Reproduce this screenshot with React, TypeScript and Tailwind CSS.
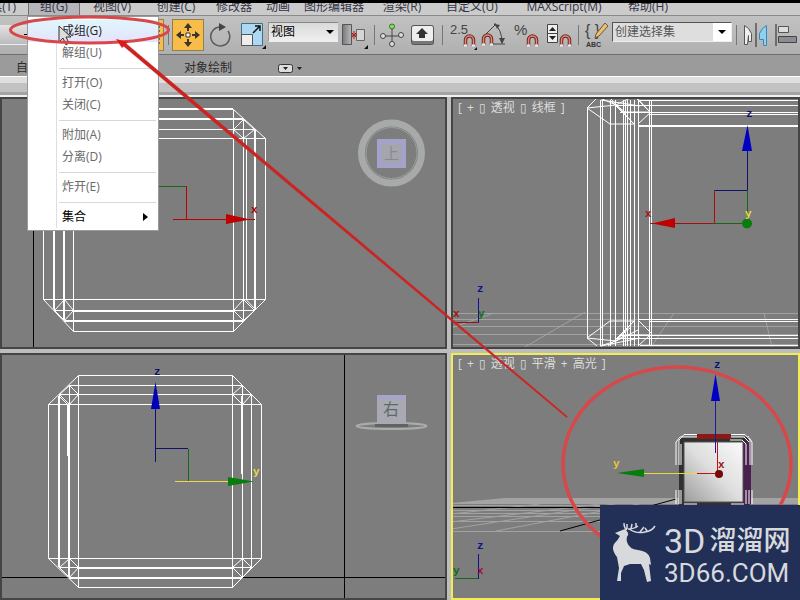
import React from "react";

const CJK = "font-['Open_Sans','Noto_Sans_CJK_SC',sans-serif]";

const menus = [
  { label: "组(G)", width: "w-[52px]", open: true },
  { label: "视图(V)", width: "w-16" },
  { label: "创建(C)", width: "w-16" },
  { label: "修改器", width: "w-[52px]" },
  { label: "动画", width: "w-9" },
  { label: "图形编辑器", width: "w-[76px]" },
  { label: "渲染(R)", width: "w-[60px]" },
  { label: "自定义(U)", width: "w-20" },
  { label: "MAXScript(M)", width: "w-[104px]" },
  { label: "帮助(H)", width: "w-16" },
];

function MenuBar() {
  return (
    <nav className="flex h-[13px] shrink-0 items-end overflow-hidden border-b border-[#8a8a8a] bg-[#cbcbcb] text-xs text-[#333344]">
      <button className="flex h-4 w-7 shrink-0 justify-end overflow-hidden pr-3 leading-4">
        <span className="shrink-0">工具(T)</span>
      </button>
      {menus.map((m) => (
        <button
          key={m.label}
          className={`${m.width} h-4 shrink-0 whitespace-nowrap leading-4 ${m.open ? "border-x border-[#707070] bg-[#b5b5ba]" : ""}`}
        >
          {m.label}
        </button>
      ))}
    </nav>
  );
}

function Item({ label, state }: { label: string; state?: "hot" | "on" | "sub" }) {
  return (
    <button
      className={`flex h-[22px] w-full items-center pl-[34px] pr-2.5 text-left ${
        state === "hot" ? "bg-gradient-to-b from-[#dff6fc] to-[#e6e2fb] text-[#222]" : state ? "text-black" : "text-[#686868]"
      }`}
    >
      <span className="grow">{label}</span>
      {state === "sub" && (
        <svg width="5" height="8" viewBox="0 0 5 8">
          <path d="M0 0L5 4L0 8Z" />
        </svg>
      )}
    </button>
  );
}

function Separator() {
  return (
    <div className="flex h-2 items-center pl-[31px] pr-0.5">
      <div className="h-px w-full bg-[#d8d8d8]" />
    </div>
  );
}

function GroupMenu() {
  return (
    <div className="absolute left-[27px] top-4 w-[132px] border border-[#9a9a9a] bg-white pb-0.5 pt-[3px] text-xs">
      <div className="absolute inset-y-0.5 left-7 w-px bg-[#dedede]" />
      <div className="relative">
        <Item label="成组(G)" state="hot" />
        <Item label="解组(U)" />
        <Separator />
        <Item label="打开(O)" />
        <Item label="关闭(C)" />
        <Separator />
        <Item label="附加(A)" />
        <Item label="分离(D)" />
        <Separator />
        <Item label="炸开(E)" />
        <Separator />
        <Item label="集合" state="sub" />
      </div>
    </div>
  );
}

function Tool({ label, width = "w-8", active, children }: { label: string; width?: string; active?: boolean; children: React.ReactNode }) {
  return (
    <button aria-label={label} className={`${width} flex h-8 shrink-0 items-center justify-center ${active ? "border border-[#8f8050] bg-[#f8bd48]" : ""}`}>
      {children}
    </button>
  );
}

function Divider() {
  return (
    <div className="flex h-5 w-2 shrink-0 justify-center">
      <div className="w-px bg-[#777]" />
    </div>
  );
}

function Magnet({ x, y }: { x: number; y: number }) {
  return (
    <g transform={`translate(${x} ${y})`} fill="none">
      <path d="M1.500 11V5a3.500 3.500 0 0 1 8 0v6" stroke="#6b2a22" strokeWidth="3.500" />
      <path d="M1.500 11V5a3.500 3.500 0 0 1 8 0v6" stroke="#e88474" strokeWidth="1.500" />
      <path d="M0 10.500h3M8 10.500h3" stroke="#eee" strokeWidth="2" />
    </g>
  );
}

function Toolbar() {
  return (
    <div className="flex h-[39px] shrink-0 items-center overflow-hidden border-b border-[#6f6f6f] bg-gradient-to-b from-[#c2c2c2] to-[#b0b0b0]">
      <div className="flex h-8 w-[132px] shrink-0 items-start pt-1.5">
        <div className="flex h-5 w-10 items-center border-b border-[#eee] bg-gradient-to-b from-[#e2e2e2] to-[#bcbcbc] pl-6">
          <div className="h-px w-1 bg-black" />
        </div>
      </div>
      <Tool label="选择区域" active>
        <svg width="28" height="24" viewBox="0 0 28 24">
          <rect x="3" y="1" width="22" height="22" fill="none" stroke="#111" strokeDasharray="2 2" />
        </svg>
      </Tool>
      <Divider />
      <Tool label="选择并移动" active>
        <svg width="24" height="24" viewBox="0 0 24 24" fill="#3b352a">
          <path d="M12 0l4 5h-3v3h-2V5H8zM12 24l4-5h-3v-3h-2v3H8zM0 12l5-4v3h3v2H5v3zM24 12l-5-4v3h-3v2h3v3z" />
          <path d="M10 10h4v4h-4z" fill="#fff" stroke="#3b352a" />
        </svg>
      </Tool>
      <Tool label="选择并旋转">
        <svg width="24" height="24" viewBox="0 0 24 24">
          <path d="M13 4A9.500 9.500 0 1 0 20 8" fill="none" stroke="#5a5a5a" strokeWidth="1.500" />
          <path d="M11 0l7 4-7 4z" fill="#444" />
        </svg>
      </Tool>
      <Tool label="选择并缩放">
        <svg width="28" height="28" viewBox="0 0 28 28">
          <path d="M3.500 2.500h21v22h-21z" fill="#acd9f1" stroke="#3d718c" />
          <path d="M3.500 13.500h11v11h-11z" fill="#eee" stroke="#555" />
          <path d="M15 12l7-7M17 5h5v5" fill="none" stroke="#111" strokeWidth="1.500" />
          <path d="M28 24v4h-4z" fill="#111" />
        </svg>
      </Tool>
      <div className="relative h-8 w-[70px] shrink-0 py-[3px]">
        <select
          aria-label="参考坐标系"
          className="block h-5 w-full appearance-none border-b border-l border-t border-b-[#eee] border-l-[#999] border-t-[#888] bg-gradient-to-b from-[#dadada] to-[#efefef] pl-0.5 text-xs leading-4 text-black"
        >
          <option>视图</option>
        </select>
        <svg className="pointer-events-none absolute right-1 top-[11px]" width="8" height="4" viewBox="0 0 8 4">
          <path d="M0 0h8L4 4z" />
        </svg>
      </div>
      <Tool label="使用轴点中心">
        <svg width="28" height="28" viewBox="0 0 28 28">
          <defs>
            <linearGradient id="pv">
              <stop stopColor="#75797c" />
              <stop offset="1" stopColor="#b6babd" />
            </linearGradient>
          </defs>
          <path d="M2.500 3.500h9v20h-9z" fill="url(#pv)" stroke="#555" />
          <path d="M16.500 8.500h8v11h-8z" fill="#d5d5d5" stroke="#666" />
          <path d="M11 14h6M14 10v8M12 12l4 4M16 12l-4 4" stroke="#b11919" />
          <path d="M28 24v4h-4z" fill="#111" />
        </svg>
      </Tool>
      <Divider />
      <Tool label="选择并操纵" width="w-7">
        <svg width="24" height="24" viewBox="0 0 24 24" fill="#ddd" stroke="#444">
          <path d="M12 3v18M2 13h20" />
          <circle cx="12" cy="3.500" r="2.500" fill="#8fd46c" stroke="#2e7a1a" />
          <circle cx="12" cy="21" r="2.500" />
          <circle cx="3" cy="13" r="2.500" />
          <circle cx="21" cy="12" r="2.500" />
        </svg>
      </Tool>
      <Tool label="键盘快捷键覆盖切换">
        <svg width="24" height="22" viewBox="0 0 24 22">
          <rect x="1.500" y="1.500" width="22" height="19" rx="2" fill="#777" stroke="#555" />
          <rect x="2" y="2" width="21" height="15" rx="2" fill="#eee" />
          <path d="M12 4l6 6h-3v4H9v-4H6z" fill="#333" />
        </svg>
      </Tool>
      <Divider />
      <Tool label="捕捉开关">
        <svg width="32" height="32" viewBox="0 0 32 32">
          <text x="4" y="15" fontSize="13" fill="#444" fontFamily="Liberation Sans">2.5</text>
          <Magnet x={18} y={16} />
          <path d="M31 28v3h-3z" fill="#111" />
        </svg>
      </Tool>
      <Tool label="角度捕捉切换">
        <svg width="32" height="32" viewBox="0 0 32 32">
          <path d="M6 17L18 5l-2 0M14 25h13M16 5q8 5 8 19" fill="none" stroke="#444" />
          <path d="M21 19h6l-3 6zM17 5l5 1-3 4z" fill="#444" />
          <Magnet x={4} y={15} />
        </svg>
      </Tool>
      <Tool label="百分比捕捉切换">
        <svg width="32" height="32" viewBox="0 0 32 32">
          <text x="4" y="16" fontSize="15" fill="#444" fontFamily="Liberation Sans">%</text>
          <Magnet x={17} y={16} />
        </svg>
      </Tool>
      <Tool label="微调器捕捉切换">
        <svg width="32" height="32" viewBox="0 0 32 32">
          <path d="M5.500 5.500h10v18h-10zM5 14.500h11" fill="#eee" stroke="#444" />
          <path d="M7 12l3.500-4 3.500 4zM7 17l3.500 4 3.500-4z" fill="#222" />
          <Magnet x={18} y={16} />
        </svg>
      </Tool>
      <Divider />
      <Tool label="编辑命名选择集" width="w-[30px]">
        <svg width="28" height="30" viewBox="0 0 28 30">
          <text x="2" y="16" fontSize="16" fill="#444" fontFamily="Liberation Sans">{"{ }"}</text>
          <path d="M13 14l9-11 3 3-9 10-4 2z" fill="#edc06b" stroke="#654" />
          <text x="3" y="27" fontSize="7" fontWeight="bold" fill="#333" fontFamily="Liberation Sans">ABC</text>
        </svg>
      </Tool>
      <div className="h-8 w-[120px] shrink-0 py-[3px]">
        <div className="flex h-5 border border-b-[#eee] border-l-[#555] border-r-[#eee] border-t-[#555] bg-white">
          <input aria-label="命名选择集" defaultValue="创建选择集" className="w-[100px] bg-[#dedede] pl-0.5 text-xs leading-4 text-[#555] outline-none" />
          <button aria-label="展开" className="flex grow items-center justify-center">
            <svg width="8" height="4" viewBox="0 0 8 4">
              <path d="M0 0h8L4 4z" />
            </svg>
          </button>
        </div>
      </div>
      <Divider />
      <Tool label="镜像">
        <svg width="28" height="28" viewBox="0 0 28 28">
          <path d="M2.500 4.500l4 3 3 5v8h-3v-6l-1 9h-3z" fill="#eee" stroke="#555" />
          <path d="M24.500 4.500l-4 3-3 5v6h4v6h3z" fill="#8ed0f2" stroke="#3a88b4" />
          <path d="M14 2v24" stroke="#222" />
        </svg>
      </Tool>
      <Tool label="对齐" width="w-7">
        <svg width="28" height="28" viewBox="0 0 28 28">
          <path d="M4 3v22" stroke="#222" />
          <path d="M6.500 5.500h10v6h-10z" fill="#ddd" stroke="#555" />
          <path d="M6.500 15.500h18v6h-18z" fill="#8a8e94" stroke="#444" />
        </svg>
      </Tool>
    </div>
  );
}

function Ribbon() {
  return (
    <div className="shrink-0">
      <div className="flex h-[21px] items-center bg-[#9b9b9b] pt-1 text-xs text-[#2b2b2b]">
        <button className="ml-4 w-[168px] shrink-0 text-left">自由形式</button>
        <button className="w-24 shrink-0 text-left">对象绘制</button>
        <button aria-label="功能区选项" className="-ml-0.5 flex items-center">
          <svg width="26" height="10" viewBox="0 0 26 10">
            <rect x="0.500" y="1.500" width="14" height="8" rx="2" fill="#ddd" stroke="#333" />
            <path d="M5 4h5L7.500 7zM19 4h5L21.500 7z" fill="#222" />
          </svg>
        </button>
      </div>
      <div className="h-[7px] border-t border-white bg-[#dfdfdf]" />
      <div className="h-[9px] bg-[#c2c2c2]" />
      <div className="h-[3px] bg-[#a4a4a4]" />
      <div className="h-0.5 bg-[#f0f0f0]" />
    </div>
  );
}

/* Wireframe of a chamfered box; every list runs from the outermost edge inwards. */
function Cage({ l, r, t, b }: { l: number[]; r: number[]; t: number[]; b: number[] }) {
  let d = "";
  for (let i = 0; i < 4; i++) {
    const k = 3 - i;
    d += `M${l[i]} ${t[k]}V${b[k]}M${r[i]} ${t[k]}V${b[k]}M${l[k]} ${t[i]}H${r[k]}M${l[k]} ${b[i]}H${r[k]}`;
  }
  for (const x of [l, r])
    for (const y of [t, b])
      d += `M${x[0]} ${y[3]}L${x[3]} ${y[0]}M${x[1]} ${y[2]}L${x[2]} ${y[3]}M${x[2]} ${y[1]}L${x[3]} ${y[2]}L${x[2]} ${y[3]}M${x[1]} ${y[2]}L${x[2]} ${y[1]}`;
  return <path d={d} fill="none" stroke="#fff" />;
}

function Axis({ x, y, fill, children }: { x: number; y: number; fill: string; children: string }) {
  return (
    <text x={x} y={y} fill={fill} fontSize="11" fontWeight="bold" fontFamily="Liberation Mono">
      {children}
    </text>
  );
}

function Viewport({ label, active, children }: { label?: string[]; active?: boolean; children: React.ReactNode }) {
  return (
    <section className="relative overflow-hidden bg-[#7d7d7d]">
      {children}
      {label && (
        <div className="relative flex gap-[5px] pl-[7px] pt-0.5 text-xs leading-[18px] text-[#dcdcdc]">
          {label.map((s, i) => (
            <span key={i}>{s}</span>
          ))}
        </div>
      )}
      <div className={`pointer-events-none absolute inset-0 border-2 ${active ? "border-[#f1ed55]" : "border-[#454545]"}`} />
    </section>
  );
}

function TopView() {
  return (
    <Viewport>
      <svg className="absolute left-0 top-0" width="447" height="252" viewBox="0 97 447 252">
        <path d="M33.500 97V349" stroke="#000" />
        <Cage l={[43.5, 54.5, 64.5, 73.5]} r={[265.5, 254.5, 243.5, 233.5]} t={[109.5, 119.5, 129.5, 138.5]} b={[331.5, 320.5, 310.5, 299.5]} />
        <path d="M246.500 138V300L255 309M73 311.500H233M64 321.500H243M53.500 231V309M63.500 231V319M255.500 129V309M150 108.500H233M150 118.500H243" fill="none" stroke="#fff" />
        <path d="M150 186.500H186" stroke="#176b1b" />
        <path d="M186.500 186V219M173 219.500H255" stroke="#b00" fill="none" />
        <path d="M226 214L250 219.500L226 224Z" fill="#c00000" />
        <Axis x={251} y={213} fill="#a00">x</Axis>
        <circle cx="391.500" cy="153" r="30" fill="none" stroke="#a7aaa8" strokeWidth="7" />
        <circle cx="391.500" cy="153" r="25.500" fill="none" stroke="#99a09c" />
        <path d="M377 139h29v29h-29z" fill="#a3a3c9" />
        <path d="M382 144h19v19h-19z" fill="#a5a5ae" />
        <text x="384" y="159" fontSize="15" fill="#858a94" fontFamily="Noto Sans CJK SC">上</text>
      </svg>
    </Viewport>
  );
}

function WireView() {
  const vertical = [587.5, 600.5, 602.5, 610.5, 615.5, 623.5, 625.5, 627.5, 630.5, 634.5, 638.5, 649.5, 651.5];
  return (
    <Viewport label={["[", "+", "▯", "透视", "▯", "线框", "]"]}>
      <svg className="absolute left-0 top-0" width="349" height="252" viewBox="451 97 349 252">
        <path d="M451 313.500H800M451 319.500H800M451 326.500H800M451 334.500H800M451 344.500H800M525 347L585 312M651 347L674 313M764 313L772 347M451 328L494 313" stroke="#a2a2a2" fill="none" />
        <path d={vertical.map((x) => `M${x} ${x === 587.5 ? 108 : 100}V${x === 587.5 ? 338 : 346}`).join("")} stroke="#fff" />
        <path
          d="M640 100.500H800M616 105.500H800M620 112.500H800M650 114.500H800M638 125.500H800M638 126.500H800M638 319.500H800M650 321.500H800M620 335.500H800M616 338.500H800M640 345.500H800"
          stroke="#fff"
        />
        <path
          d="M587 108L597 98M587 108L610 124H634L610 100M587 108L616 105L600 98M610 98L634 124M616 105L630 98M616 105L625 112H650L638 99M638 124L651 112M636 98L650 112M601 100L640 106M587 338L610 321H634L610 345M587 338L597 346M587 338L616 341L600 346M616 341L634 321M616 341L638 330M616 341L625 335H650L638 346M638 320L651 333M608 346L630 328M601 346L640 338"
          stroke="#fff"
          fill="none"
        />
        <path d="M747.500 150V190.500H714" stroke="#101070" fill="none" />
        <path d="M742 151L747.500 125L752 151Z" fill="#0000c4" />
        <path d="M714.500 190V223.500H650" stroke="#a81010" fill="none" />
        <path d="M675 218L652 223.500L675 228Z" fill="#c00000" />
        <path d="M714 223.500H747.500V190" stroke="#106b14" fill="none" />
        <circle cx="747" cy="223.500" r="5" fill="#087c0c" />
        <Axis x={746} y={117} fill="#101070">z</Axis>
        <Axis x={645} y={217} fill="#a01010">x</Axis>
        <Axis x={745} y={217} fill="#e8da40">y</Axis>
        <path d="M478.500 298V322" stroke="#101090" />
        <path d="M453 322.500H479" stroke="#991515" />
        <Axis x={477} y={292} fill="#101090">z</Axis>
        <Axis x={453} y={317} fill="#a01010">x</Axis>
        <Axis x={478} y={317} fill="#106b14">y</Axis>
      </svg>
    </Viewport>
  );
}

function SideView() {
  return (
    <Viewport>
      <svg className="absolute left-0 top-0" width="447" height="247" viewBox="0 353 447 247">
        <path d="M0 577.500H447M344.500 353V600" stroke="#000" />
        <Cage l={[48.5, 59.5, 69.5, 78.5]} r={[261.5, 251.5, 242.5, 232.5]} t={[375.5, 385.5, 394.5, 404.5]} b={[587.5, 577.5, 567.5, 558.5]} />
        <path d="M58.500 396V567M68.500 405V577M67.500 404V456M241.500 396V474M78 568.500H232M69 578.500H242M59 396L67 404" stroke="#fff" fill="none" />
        <path d="M155.500 405V462M155 448.500H188" stroke="#101070" />
        <path d="M151 409L155.500 382L160 409Z" fill="#0000b8" />
        <path d="M188.500 449V481" stroke="#106b14" />
        <path d="M175 481.500H228" stroke="#e8da40" />
        <path d="M228 477L254 481.500L228 486Z" fill="#087c0c" />
        <Axis x={154} y={375} fill="#101070">z</Axis>
        <Axis x={253} y={475} fill="#e8da40">y</Axis>
        <ellipse cx="391.500" cy="426" rx="35" ry="3" fill="none" stroke="#a9acaa" strokeWidth="2" />
        <path d="M375 424h33v3h-33z" fill="#5f6361" />
        <path d="M377 395h29v29h-29z" fill="#a9a9b2" />
        <path d="M377 395h29v5h-29z" fill="#a5a5c6" />
        <text x="383" y="415" fontSize="16" fill="#5c6a70" fontFamily="Noto Sans CJK SC">右</text>
      </svg>
    </Viewport>
  );
}

function ShadedView() {
  return (
    <Viewport active label={["[", "+", "▯", "透视", "▯", "平滑", "+", "高光", "]"]}>
      <svg className="absolute left-0 top-0" width="349" height="247" viewBox="451 353 349 247">
        <defs>
          <linearGradient id="face" x1="1" y1="0" x2="0" y2="1">
            <stop stopColor="#fafafa" />
            <stop offset="0.500" stopColor="#dedede" />
            <stop offset="1" stopColor="#9c9c9c" />
          </linearGradient>
        </defs>
        <path d="M451 503L505 498H800V504H451Z" fill="#a3a3a3" />
        <path d="M451 510.500H800M451 513.500H800M451 516.500H800M451 521.500H800M451 531.500H800M451 505.500H800M451 514L540 504M451 522L600 504M451 529L640 500M496 531L660 500" stroke="#a2a2a2" fill="none" />
        <path d="M451 507.500H620M560 531L676 499" stroke="#000" />
        <path d="M679 437h71v68h-71z" fill="#303030" />
        <path d="M743 442h8v62h-8z" fill="#49204f" />
        <path d="M697 434h34v5h-34z" fill="#8c1818" />
        <path d="M684 442h59v60h-59z" fill="url(#face)" stroke="#555" />
        <path
          d="M679 465V440L684 434.500H697M676 465V442L680 437H697M681 465V444M731 434.500H745L750 440V465M731 437H744L749 442M752 465V442L748 436M730 440H742L746 444V465M676 490V504M679 490V504M681 490V504M746 490V504M749 490V504M752 490V504M684 504H697M731 504H744"
          stroke="#fff"
          fill="none"
        />
        <path d="M715.500 400V453" stroke="#1a1a9a" />
        <path d="M711 401L715.500 374L720 401Z" fill="#0000c4" />
        <path d="M717.500 442V472M697 473.500H719" stroke="#c01020" fill="none" />
        <path d="M643 473.500H697" stroke="#e8da30" />
        <path d="M644 469L617 473L644 477Z" fill="#087c0c" />
        <circle cx="719" cy="474" r="4" fill="#780808" />
        <Axis x={714} y={368} fill="#101070">z</Axis>
        <Axis x={613} y={467} fill="#e8c830">y</Axis>
        <Axis x={718} y={468} fill="#9c1010">x</Axis>
        <path d="M478.500 554V579" stroke="#101090" />
        <path d="M455 578.500H478" stroke="#106b14" />
        <Axis x={477} y={549} fill="#101090">z</Axis>
        <Axis x={453} y={574} fill="#106b14">y</Axis>
        <Axis x={477} y={574} fill="#a01040">x</Axis>
      </svg>
    </Viewport>
  );
}

function Annotations() {
  return (
    <svg className="pointer-events-none absolute left-0 top-0" width="800" height="600" viewBox="0 0 800 600">
      <path d="M59 26v16l4-4 3 7 3-2-3-6h5z" fill="#ddd" stroke="#333" />
      <g fill="none" stroke="#d8484a">
        <ellipse cx="89.500" cy="30" rx="79" ry="13" strokeWidth="3" />
        <ellipse cx="677" cy="464" rx="114" ry="97" strokeWidth="3.500" />
      </g>
      <path d="M123 41L567.500 416.500L566.500 417.500L121 44Z" fill="#c82422" stroke="#d02a28" strokeWidth="0.500" />
      <path d="M116 39L128 42L122 48Z" fill="#e01818" />
    </svg>
  );
}

function Watermark() {
  return (
    <div className="absolute bottom-0 right-0 flex h-[95px] w-[200px] items-center gap-2 bg-[#223058] pl-3 text-[#d8d9dc]">
      <svg className="shrink-0" width="44" height="60" viewBox="12 23 44 60" fill="currentColor">
        <path d="M15 33L25 29Q29 33 28 35Q26 37 27 42Q29 49 38 50Q48 51 50 58L51 65L49 64L51 81L47 82L44 70L41 64L30 64L24 66L21 73L21 81H17L19 68L17 57Q11 50 14 44Q18 40 20 36Z" />
        <path d="M27 30Q24 28 24 23M28 29Q34 29 38 26M27 29L27 24M31 29L32 24M36 27L36 23M29 29Q36 34 45 32Q52 31 55 26M40 32L44 27M47 31L45 28" stroke="currentColor" strokeWidth="1.500" fill="none" />
      </svg>
      <div className="whitespace-nowrap pt-1 font-['Roboto','Noto_Sans_CJK_SC',sans-serif]">
        <div className="flex items-center gap-1 leading-9">
          <span className="text-[34px]">3D</span>
          <span className="text-[27px] font-medium">溜溜网</span>
        </div>
        <div className="text-[26px] leading-7">3D66.COM</div>
      </div>
    </div>
  );
}

export default function App() {
  return (
    <main className={`relative flex h-screen w-full flex-col overflow-hidden bg-[#bdbdbd] ${CJK}`}>
      <div className="h-[3px] shrink-0 bg-black" />
      <MenuBar />
      <Toolbar />
      <Ribbon />
      <div className="grid grow grid-cols-[447fr_349fr] grid-rows-[252fr_247fr] gap-1">
        <TopView />
        <WireView />
        <SideView />
        <ShadedView />
      </div>
      <GroupMenu />
      <Annotations />
      <Watermark />
    </main>
  );
}
